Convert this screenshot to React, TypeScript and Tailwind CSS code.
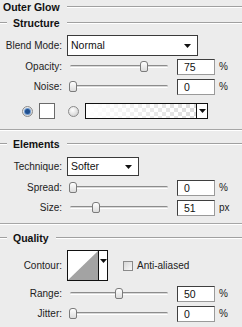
const font = "font-['Liberation_Sans',Arial,sans-serif]";

function Arrow() {
  return (
    <svg width="7" height="4" viewBox="0 0 7 4">
      <path d="M0 0h7L3.5 4z" fill="#111" />
    </svg>
  );
}

function Header({ title, first }: { title: string; first?: boolean }) {
  return (
    <div className="flex items-center h-full">
      {!first && <div className="w-[7px] h-[2px] border-t border-[#a0a0a0] bg-white" />}
      <span className={`font-bold text-[10.5px] text-[#111] ${first ? "ml-[3px]" : "ml-[6px]"}`}>{title}</span>
      <div className="flex-1 ml-[7px] h-[2px] border-t border-[#a0a0a0] bg-white" />
    </div>
  );
}

function Slider({ pos }: { pos: number }) {
  return (
    <div className="relative w-[98px] h-full ml-[8px]">
      <div className="absolute left-0 right-0 top-[6px] h-[3px] border-t border-[#8c8c8c] bg-[#d8d8d8] border-b-white border-b rounded-sm" />
      <div
        className="absolute top-[2px] w-[8px] h-[11px] rounded-t-[3px] rounded-b-[2px] border border-[#7b7b7b] bg-[linear-gradient(#ffffff,#dcdcdc)]"
        style={{ left: pos - 4 }}
      />
    </div>
  );
}

function SliderRow({ label, pos, value, unit }: { label: string; pos: number; value: string; unit: string }) {
  return (
    <div className="flex items-center h-[16px]">
      <span className="w-[62px] text-right text-[10px] text-[#222]">{label}</span>
      <Slider pos={pos} />
      <div className="ml-[9px] w-[38px] h-[16px] bg-white border border-[#3f3f3f] border-r-[#9a9a9a] border-b-[#9a9a9a] flex items-center pl-[6px] text-[10.5px] text-[#111]">
        {value}
      </div>
      <span className="ml-[4px] text-[10px] text-[#222]">{unit}</span>
    </div>
  );
}

function Radio({ on }: { on?: boolean }) {
  return (
    <div className="w-[11px] h-[11px] rounded-full border border-[#8a8a8a] bg-[radial-gradient(circle_at_40%_35%,#ffffff,#c8c8c8)] flex items-center justify-center">
      {on && <div className="w-[5px] h-[5px] rounded-full bg-[#1f4f8f] shadow-[0_0_0_1px_#6f9ad0]" />}
    </div>
  );
}

function Separator() {
  return <div className="h-[2px] border-t border-[#a6a6a6] bg-white" />;
}

export default function App() {
  return (
    <div className={`w-[242px] h-[327px] bg-[#ececec] overflow-hidden ${font} leading-none`}>
      <div className="h-[14px]">
        <Header title="Outer Glow" first />
      </div>
      <div className="h-[18px]">
        <Header title="Structure" />
      </div>

      <div className="mt-[3px] flex items-center h-[21px]">
        <span className="w-[62px] text-right text-[10px] text-[#222]">Blend Mode:</span>
        <div className="ml-[5px] w-[131px] h-[21px] bg-white border border-[#3a3a3a] flex items-center justify-between pl-[3px] pr-[6px] text-[10.5px] text-[#111]">
          <span>Normal</span>
          <Arrow />
        </div>
      </div>

      <div className="mt-[3px]">
        <SliderRow label="Opacity:" pos={74} value="75" unit="%" />
      </div>
      <div className="mt-[4px]">
        <SliderRow label="Noise:" pos={3} value="0" unit="%" />
      </div>

      <div className="mt-[8px] flex items-center h-[16px]">
        <div className="ml-[22px]">
          <Radio on />
        </div>
        <div className="ml-[6px] w-[16px] h-[16px] bg-white border border-[#6a6a6a]" />
        <div className="ml-[13px]">
          <Radio />
        </div>
        <div className="ml-[6px] w-[123px] h-[16px] border border-[#111] flex">
          <div className="flex-1 bg-[linear-gradient(to_right,#ffffff,rgba(255,255,255,0)),conic-gradient(#dcdcdc_25%,#ffffff_0_50%,#dcdcdc_0_75%,#ffffff_0)] [background-size:100%_100%,8px_8px]" />
          <div className="w-[11px] border-l border-[#111] bg-white flex items-center justify-center">
            <Arrow />
          </div>
        </div>
      </div>

      <div className="mt-[10px]">
        <Separator />
      </div>
      <div className="mt-[5px] h-[16px]">
        <Header title="Elements" />
      </div>

      <div className="mt-[5px] flex items-center h-[19px]">
        <span className="w-[62px] text-right text-[10px] text-[#222]">Technique:</span>
        <div className="ml-[5px] w-[72px] h-[19px] bg-white border border-[#3a3a3a] flex items-center justify-between pl-[3px] pr-[6px] text-[10.5px] text-[#111]">
          <span>Softer</span>
          <Arrow />
        </div>
      </div>

      <div className="mt-[4px]">
        <SliderRow label="Spread:" pos={3} value="0" unit="%" />
      </div>
      <div className="mt-[4px]">
        <SliderRow label="Size:" pos={26} value="51" unit="px" />
      </div>

      <div className="mt-[7px]">
        <Separator />
      </div>
      <div className="mt-[5px] h-[16px]">
        <Header title="Quality" />
      </div>

      <div className="mt-[4px] flex items-center h-[31px]">
        <span className="w-[62px] text-right text-[10px] text-[#222]">Contour:</span>
        <div className="ml-[5px] w-[41px] h-[31px] border border-[#111] flex bg-white">
          <svg width="30" height="29" viewBox="0 0 30 29">
            <path d="M0 29L30 0V29z" fill="#a3a3a3" />
          </svg>
          <div className="flex-1 border-l border-[#111] flex justify-center pt-[8px]">
            <Arrow />
          </div>
        </div>
        <div className="ml-[15px] w-[10px] h-[10px] border border-[#8a8a8a] bg-[linear-gradient(135deg,#d6d6d6,#f8f8f8)]" />
        <span className="ml-[4px] text-[10px] text-[#222]">Anti-aliased</span>
      </div>

      <div className="mt-[5px]">
        <SliderRow label="Range:" pos={49} value="50" unit="%" />
      </div>
      <div className="mt-[4px]">
        <SliderRow label="Jitter:" pos={3} value="0" unit="%" />
      </div>
    </div>
  );
}
